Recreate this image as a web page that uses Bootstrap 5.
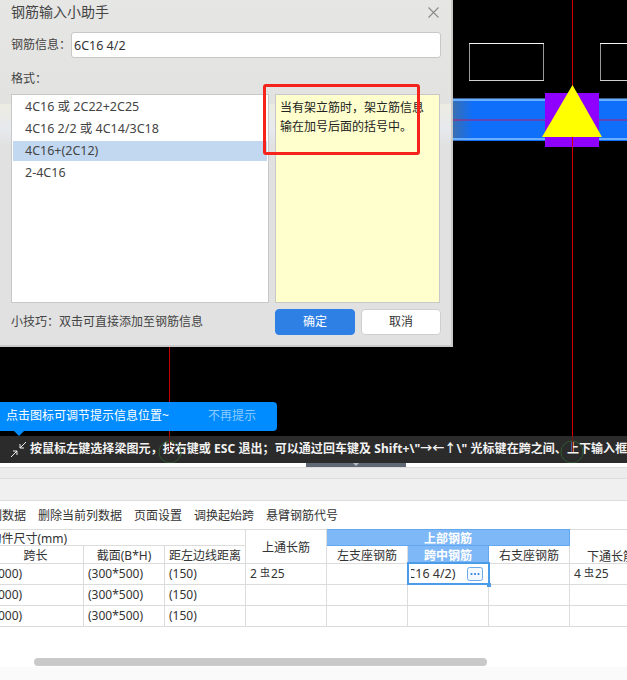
<!DOCTYPE html>
<html lang="zh-CN">
  <head>
    <meta charset="UTF-8" />
    <title>钢筋输入小助手</title>
    <link rel="stylesheet" href="https://cdn.jsdelivr.net/npm/bootstrap@5.3.0/dist/css/bootstrap.min.css" />
    <style>
      html, body { height: 100%; overflow: hidden; }
      body { background: #fafafa; color: #333; font: 12px/1.2 "Noto Sans", "Noto Sans CJK SC", sans-serif; }
      .page-wrap { width: 627px; height: 680px; overflow: hidden; }

      /* cad canvas */
      .cad-area { height: 436px; background: #000; overflow: hidden; }
      .cad-svg { left: 0; top: 0; }

      /* dialog */
      .rebar-dialog { left: 0; top: 0; width: 453px; height: 347px; padding: 0 10px 0 11px; color: #444;
        background: linear-gradient(180deg, #e6e6e4 0, #e2e2e0 30%, #e3e3e0 90px, #ecece2 104px, #e6e9ee 130px, #e1e1e1 145px);
        border-right: 2px solid #c9c9c9; border-bottom: 2px solid #c9c9c9; }
      .dlg-title { height: 24px; margin-bottom: 8px; font-size: 14px; }
      .dlg-close { width: 13px; height: 13px; margin-right: 1px; }
      .dlg-input { height: 26px; width: 370px; border: 1px solid #c8c8c8; border-radius: 3px; background: #fff; padding: 0 2px; font-size: 12.5px; color: #333; }
      .dlg-label { width: 60px; }
      .format-label { margin: 14px 0 7px; height: 15px; }
      .format-list { flex: none; width: 258px; height: 209px; background: #fff; border: 1px solid #c8c8c8; padding: 1px; list-style: none; margin: 0; }
      .format-list li { height: 22px; padding-left: 12px; font-size: 12.5px; line-height: 22px; }
      .format-list li.picked { background: #c2d8f0; height: 20px; line-height: 20px; margin: 1px 0; }
      .format-note { flex: none; width: 165px; height: 209px; margin-left: 6px; background: #ffffcd; border: 1px solid #c8c8c8; padding: 3px 4px; line-height: 19px; color: #222; }
      .dlg-foot { margin-top: 6px; }
      .tip-text { width: 264px; }
      .dlg-btn { width: 80px; height: 26px; border-radius: 4px; font-size: 12px; padding: 0; }
      .dlg-ok { background: #2f80e4; color: #fff; border: 1px solid #2f80e4; }
      .dlg-cancel { background: #fff; color: #333; border: 1px solid #cfcfcf; margin-left: 6px; }

      .red-mark { left: 263px; top: 84px; width: 157px; height: 71px; border: 3px solid #f5231c; border-radius: 3px; }

      /* tooltip */
      .hint-pop { left: 0; top: 402px; width: 277px; height: 29px; background: #008cff; color: #fff; border-radius: 0 4px 4px 0; padding-left: 6px; }
      .hint-pop::after { content: ""; position: absolute; left: 14px; bottom: -5px; border: 5px solid transparent; border-bottom: 0; border-top-color: #008cff; }
      .hint-off { margin-left: 39px; color: #8ccbff; }

      /* status bar */
      .status-strip { height: 27px; background: #2b2b2b; color: #f2f2f2; padding-left: 10px; font-weight: 700; letter-spacing: .06px; white-space: nowrap; overflow: hidden; }
      .status-icon { width: 17px; height: 17px; margin-right: 3px; flex: none; }
      .axis-overlay { left: 0; top: 0; pointer-events: none; }

      .split-white { height: 4px; background: #fff; }
      .split-handle { width: 100px; height: 4px; margin-left: 306px; background: #5f6874; }
      .split-handle::after { content: ""; position: absolute; left: 47px; top: 0; border: 3px solid transparent; border-bottom: 0; border-top-color: #b8bcc2; }
      .band-one { height: 11px; background: #ececec; border-top: 1px solid #dcdcdc; }
      .band-two { height: 23px; background: #f0f0f0; border-top: 1px solid #dcdcdc; border-bottom: 1px solid #dcdcdc; }

      /* grid area */
      .grid-area { height: 166px; background: #fff; overflow: hidden; }
      .tool-row { height: 28px; padding-top: 2px; margin-left: -10px; gap: 12px; color: #333; white-space: nowrap; }
      .rebar-grid { width: 663px; margin-left: -13px; border-collapse: collapse; table-layout: fixed; color: #333; }
      .rebar-grid th, .rebar-grid td { border: 1px solid #dcdcdc; padding: 0 4px; font-weight: 400; white-space: nowrap; overflow: hidden; }
      .rebar-grid tr { height: 21px; }
      .rebar-grid tr.head-a { height: 16px; }
      .rebar-grid tr.head-b { height: 17px; }
      .rebar-grid th { text-align: center; padding-top: 3px; line-height: 13px; }
      .rebar-grid tr.head-a th { line-height: 12px; }
      .rebar-grid th.size-head { text-align: left; padding-left: 2px; border-left: 0; }
      .rebar-grid th.top-group { background: #7eb8f7; color: #fff; font-weight: 700; border-color: #63a7f0; }
      .rebar-grid th.mid-head { background: #7eb8f7; color: #fff; font-weight: 700; border-color: #63a7f0; }
      .rebar-grid th.low-head { vertical-align: bottom; text-align: left; padding-left: 17px; border-right: 0; }
      .rebar-grid td { padding-left: 4px; line-height: 14px; }
      .rebar-grid td.size-cut { padding-left: 0; text-align: right; padding-right: 61px; border-left: 0; }
      .rebar-sign { font-size: 10px; position: relative; top: -2px; margin: 0 1px 0 3px; }
      .rebar-grid td.cell-active { padding: 0; border: 2px solid #4a9be8; }
      .cell-inner { height: 18px; padding-left: 2px; }
      .cell-clip { width: 45px; overflow: hidden; justify-content: flex-end; font-size: 12.5px; }
      .dots-btn { width: 16px; height: 14px; margin-left: 11px; flex: none; }
      .cell-grip { left: 487px; top: 583px; width: 4px; height: 4px; background: #4a9be8; }

      .scroll-row { height: 43px; background: #fff; padding: 31px 0 0 34px; border-bottom: 1px solid #dcdcdc; }
      .scroll-thumb { width: 453px; height: 8px; border-radius: 4px; background: #c9c9c9; }
    </style>
  </head>
  <body>
    <div class="page-wrap position-relative d-flex flex-column">
      <div class="cad-area position-relative flex-shrink-0">
        <svg class="cad-svg position-absolute" width="627" height="436" viewBox="0 0 627 436">
          <defs>
            <linearGradient id="beamFade" x1="0" x2="1" y1="0" y2="0">
              <stop offset="0" stop-color="#3b6eb0" />
              <stop offset="1" stop-color="#0f6ffb" />
            </linearGradient>
          </defs>
          <rect x="453" y="98" width="174" height="43" fill="#0f6ffb" />
          <rect x="453" y="98" width="20" height="43" fill="url(#beamFade)" />
          <rect x="453" y="98" width="174" height="1" fill="#3d5f8f" />
          <rect x="453" y="99" width="174" height="2" fill="#6aaeff" />
          <rect x="453" y="138" width="174" height="2" fill="#6aaeff" />
          <g stroke="#9a9a9a" fill="none">
            <path d="M469.5 43.5v37M543.5 43.5v37M600.5 43.5v37" />
          </g>
          <g stroke="#f4f4f4" fill="none">
            <path d="M469 43.5h75M600 43.5h27" />
          </g>
          <g stroke="#cfcfcf" fill="none">
            <path d="M469 80.5h75M600 80.5h27" />
          </g>
          <line x1="453" x2="627" y1="120" y2="120" stroke="#b3206e" />
          <line x1="572.5" x2="572.5" y1="0" y2="436" stroke="#d40000" />
          <line x1="169.5" x2="169.5" y1="340" y2="436" stroke="#c00000" />
          <rect x="545" y="93" width="54" height="54" fill="#8f00ff" />
          <line x1="572.5" x2="572.5" y1="137" y2="147" stroke="#d40000" />
          <polygon points="572.5,85 602,137 542,137" fill="#ffff00" />
        </svg>

        <div class="rebar-dialog position-absolute">
          <div class="dlg-title d-flex align-items-center justify-content-between">
            <span>钢筋输入小助手</span>
            <svg class="dlg-close" viewBox="0 0 13 13"><path d="M1.5 1.5l10 10M11.5 1.5l-10 10" stroke="#8a8a8a" stroke-width="1.1" fill="none" /></svg>
          </div>
          <div class="d-flex align-items-center">
            <span class="dlg-label">钢筋信息&#xFF1A;</span>
            <input class="dlg-input" type="text" value="6C16 4/2" />
          </div>
          <div class="format-label">格式&#xFF1A;</div>
          <div class="d-flex">
            <ul class="format-list">
              <li>4C16 或 2C22+2C25</li>
              <li>4C16 2/2 或 4C14/3C18</li>
              <li class="picked">4C16+(2C12)</li>
              <li>2-4C16</li>
            </ul>
            <div class="format-note">当有架立筋时&#xFF0C;架立筋信息输在加号后面的括号中&#x3002;</div>
          </div>
          <div class="dlg-foot d-flex align-items-center">
            <div class="tip-text">小技巧&#xFF1A;双击可直接添加至钢筋信息</div>
            <button class="dlg-btn dlg-ok" type="button">确定</button>
            <button class="dlg-btn dlg-cancel" type="button">取消</button>
          </div>
        </div>

        <div class="red-mark position-absolute"></div>

        <div class="hint-pop position-absolute d-flex align-items-center">
          <span>点击图标可调节提示信息位置~</span>
          <span class="hint-off">不再提示</span>
        </div>
      </div>

      <div class="status-strip d-flex align-items-center flex-shrink-0">
        <svg class="status-icon" viewBox="0 0 17 17"><path d="M16 1l-6 6M10 3v4h4M1 16l6-6M3 10h4v4" stroke="#f2f2f2" stroke-width="1" fill="none" /></svg>
        <span>按鼠标左键选择梁图元&#xFF0C;按右键或 ESC 退出&#xFF1B;可以通过回车键及 Shift+\"→←↑\" 光标键在跨之间&#x3001;上下输入框</span>
      </div>
      <svg class="axis-overlay position-absolute" width="627" height="463" viewBox="0 0 627 463">
        <g fill="none" stroke="#2f5a2f">
          <circle cx="170" cy="452" r="11" />
          <circle cx="572" cy="452" r="11" />
        </g>
        <line x1="169.5" x2="169.5" y1="436" y2="452" stroke="#7a1515" />
        <line x1="572.5" x2="572.5" y1="436" y2="452" stroke="#7a1515" />
      </svg>

      <div class="split-white flex-shrink-0"><div class="split-handle position-relative"></div></div>
      <div class="band-one flex-shrink-0"></div>
      <div class="band-two flex-shrink-0"></div>

      <div class="grid-area flex-shrink-0">
        <div class="tool-row d-flex align-items-center">
          <span>列数据</span><span>删除当前列数据</span><span>页面设置</span><span>调换起始跨</span><span>悬臂钢筋代号</span>
        </div>
        <table class="rebar-grid">
          <colgroup>
            <col style="width:96px" /><col style="width:81px" /><col style="width:81px" /><col style="width:81px" />
            <col style="width:81px" /><col style="width:81px" /><col style="width:81px" /><col style="width:81px" />
          </colgroup>
          <tr class="head-a">
            <th class="size-head" colspan="3">构件尺寸(mm)</th>
            <th rowspan="2">上通长筋</th>
            <th class="top-group" colspan="3">上部钢筋</th>
            <th class="low-head" rowspan="2">下通长筋</th>
          </tr>
          <tr class="head-b">
            <th>跨长</th><th>截面(B*H)</th><th>距左边线距离</th>
            <th>左支座钢筋</th><th class="mid-head">跨中钢筋</th><th>右支座钢筋</th>
          </tr>
          <tr>
            <td class="size-cut">(6000)</td><td>(300*500)</td><td>(150)</td>
            <td>2<span class="rebar-sign">虫</span>25</td><td></td>
            <td class="cell-active">
              <div class="cell-inner d-flex align-items-center">
                <span class="cell-clip d-flex">6C16 4/2)</span>
                <svg class="dots-btn" viewBox="0 0 16 14"><rect x=".5" y=".5" width="15" height="13" rx="2" fill="#f4f9ff" stroke="#6aa9ea" /><g fill="#2f80e4"><circle cx="4.5" cy="7" r="1.1" /><circle cx="8" cy="7" r="1.1" /><circle cx="11.5" cy="7" r="1.1" /></g></svg>
              </div>
            </td>
            <td></td><td>4<span class="rebar-sign">虫</span>25</td>
          </tr>
          <tr><td class="size-cut">(6000)</td><td>(300*500)</td><td>(150)</td><td></td><td></td><td></td><td></td><td></td></tr>
          <tr><td class="size-cut">(6000)</td><td>(300*500)</td><td>(150)</td><td></td><td></td><td></td><td></td><td></td></tr>
        </table>
        <div class="scroll-row"><div class="scroll-thumb"></div></div>
      </div>
      <div class="cell-grip position-absolute"></div>
    </div>
    <script src="https://cdn.jsdelivr.net/npm/bootstrap@5.3.0/dist/js/bootstrap.bundle.min.js"></script>
  </body>
</html>
